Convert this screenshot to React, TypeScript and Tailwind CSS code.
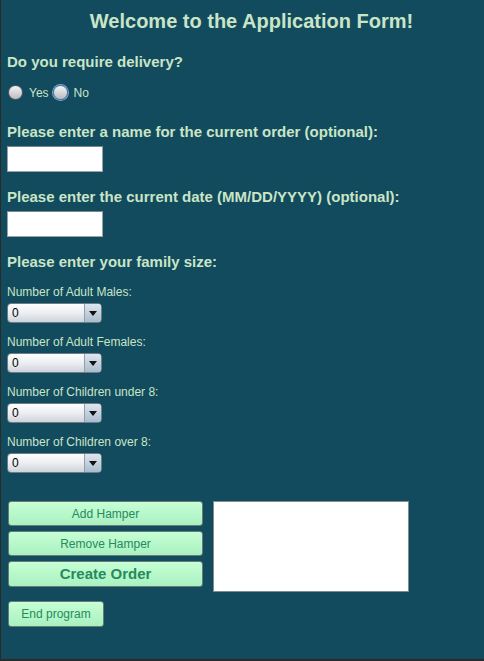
import React from "react";

const labelBold = "text-[15px] leading-[16px] font-bold text-[#c9e5c6]";
const labelSmall = "text-[12px] leading-[14px] text-[#c9e5c6]";

function Radio({ label, focused }: { label: string; focused?: boolean }) {
  return (
    <label className="flex items-center gap-[6px]">
      <span
        className={
          "block h-[15px] w-[15px] rounded-full border bg-gradient-to-b from-[#f4f4f4] to-[#b9bcc0] " +
          (focused
            ? "border-[#5b86b0] shadow-[0_0_0_1px_#7ea6cf]"
            : "border-[#55595e]")
        }
      />
      <span className="text-[12px] leading-[14px] text-[#c9e5c6]">{label}</span>
    </label>
  );
}

function TextBox() {
  return (
    <div className="h-[26px] w-[96px] border border-[#9aa3a8] border-t-[#7d8589] bg-white" />
  );
}

function Combo({ label, first }: { label: string; first?: boolean }) {
  return (
    <div className={first ? "mt-[15px]" : "mt-[12px]"}>
      <div className={labelSmall}>{label}</div>
      <div className="mt-[4px] flex h-[20px] w-[95px] overflow-hidden rounded-[4px] border border-[#6f7d87] bg-gradient-to-b from-[#ffffff] via-[#eceef2] to-[#cfd3da]">
        <span className="flex-1 pl-[4px] text-[12px] leading-[18px] text-black">0</span>
        <span className="flex w-[17px] items-center justify-center border-l border-[#8f9fad] bg-gradient-to-b from-[#dfe7ef] to-[#a9bccd]">
          <svg width="8" height="5" viewBox="0 0 8 5">
            <path d="M0 0h8L4 5z" fill="#111" />
          </svg>
        </span>
      </div>
    </div>
  );
}

function GreenButton({
  children,
  className,
}: {
  children: React.ReactNode;
  className: string;
}) {
  return (
    <button
      className={
        "flex items-center justify-center rounded-[3px] border border-[#6b7a78] bg-gradient-to-b from-[#c6ffd4] to-[#a9f1c0] text-[#268a5f] " +
        className
      }
    >
      {children}
    </button>
  );
}

export default function App() {
  return (
    <div
      className="h-[661px] w-[484px] border-b-2 border-l border-[#2b2b2b] bg-[#124a5e] pl-[6px]"
      style={{ fontFamily: '"Liberation Sans", Arial, sans-serif' }}
    >
      <div className="flex flex-col">
        <h1 className="mt-[10px] pl-[12px] text-center text-[20px] font-bold leading-[22px] text-[#c9e5c6]">
          Welcome to the Application Form!
        </h1>

        <div className={labelBold + " mt-[22px]"}>Do you require delivery?</div>
        <div className="mt-[15px] flex items-center gap-[4px] pl-[1px]">
          <Radio label="Yes" />
          <Radio label="No" focused />
        </div>

        <div className={labelBold + " mt-[24px]"}>
          Please enter a name for the current order (optional):
        </div>
        <div className="mt-[6px]">
          <TextBox />
        </div>

        <div className={labelBold + " mt-[17px]"}>
          Please enter the current date (MM/DD/YYYY) (optional):
        </div>
        <div className="mt-[6px]">
          <TextBox />
        </div>

        <div className={labelBold + " mt-[17px]"}>Please enter your family size:</div>
        <Combo label="Number of Adult Males:" first />
        <Combo label="Number of Adult Females:" />
        <Combo label="Number of Children under 8:" />
        <Combo label="Number of Children over 8:" />

        <div className="mt-[28px] flex gap-[10px] pl-[1px]">
          <div className="flex w-[195px] flex-col gap-[5px]">
            <GreenButton className="h-[25px] text-[12px]">Add Hamper</GreenButton>
            <GreenButton className="h-[25px] text-[12px]">Remove Hamper</GreenButton>
            <GreenButton className="h-[26px] text-[15px] font-bold">Create Order</GreenButton>
          </div>
          <div className="h-[91px] w-[196px] border border-[#7f8c96] bg-white" />
        </div>

        <div className="mt-[9px] pl-[1px]">
          <GreenButton className="h-[26px] w-[96px] text-[12px]">End program</GreenButton>
        </div>
      </div>
    </div>
  );
}
